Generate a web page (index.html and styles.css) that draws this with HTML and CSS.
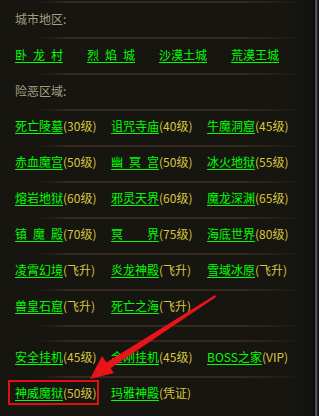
FILE: index.html
```html
<!DOCTYPE html>
<html lang="zh-CN">
<head>
<meta charset="utf-8">
<title>地图传送</title>
<link rel="stylesheet" href="styles.css">
</head>
<body>
<div class="frame">
  <div class="panel">
    <div class="row label">城市地区:</div>
    <div class="row cols4">
      <a class="link">卧&ensp;龙&ensp;村</a>
      <a class="link">烈&ensp;焰&ensp;城</a>
      <a class="link">沙漠土城</a>
      <a class="link">荒漠王城</a>
    </div>
    <div class="row label">险恶区域:</div>
    <div class="row cols3">
      <span class="cell"><a class="link">死亡陵墓</a><span class="lv">(30级)</span></span>
      <span class="cell"><a class="link">诅咒寺庙</a><span class="lv">(40级)</span></span>
      <span class="cell"><a class="link">牛魔洞窟</a><span class="lv">(45级)</span></span>
    </div>
    <div class="row cols3">
      <span class="cell"><a class="link">赤血魔宫</a><span class="lv">(50级)</span></span>
      <span class="cell"><a class="link">幽&ensp;冥&ensp;宫</a><span class="lv">(50级)</span></span>
      <span class="cell"><a class="link">冰火地狱</a><span class="lv">(55级)</span></span>
    </div>
    <div class="row cols3">
      <span class="cell"><a class="link">熔岩地狱</a><span class="lv">(60级)</span></span>
      <span class="cell"><a class="link">邪灵天界</a><span class="lv">(60级)</span></span>
      <span class="cell"><a class="link">魔龙深渊</a><span class="lv">(65级)</span></span>
    </div>
    <div class="row cols3">
      <span class="cell"><a class="link">镇&ensp;魔&ensp;殿</a><span class="lv">(70级)</span></span>
      <span class="cell"><a class="link">冥&ensp;&ensp;&ensp;&ensp;界</a><span class="lv">(75级)</span></span>
      <span class="cell"><a class="link">海底世界</a><span class="lv">(80级)</span></span>
    </div>
    <div class="row cols3">
      <span class="cell"><a class="link">凌霄幻境</a><span class="lv">(飞升)</span></span>
      <span class="cell"><a class="link">炎龙神殿</a><span class="lv">(飞升)</span></span>
      <span class="cell"><a class="link">雪域冰原</a><span class="lv">(飞升)</span></span>
    </div>
    <div class="row cols3">
      <span class="cell"><a class="link">兽皇石窟</a><span class="lv">(飞升)</span></span>
      <span class="cell"><a class="link">死亡之海</a><span class="lv">(飞升)</span></span>
    </div>
    <div class="spacer"></div>
    <div class="row cols3">
      <span class="cell"><a class="link">安全挂机</a><span class="lv">(45级)</span></span>
      <span class="cell"><a class="link">金刚挂机</a><span class="lv">(45级)</span></span>
      <span class="cell"><a class="link">BOSS之家</a><span class="lv">(VIP)</span></span>
    </div>
    <div class="row cols3">
      <span class="cell marked"><a class="link">神威魔狱</a><span class="lv">(50级)</span></span>
      <span class="cell"><a class="link">玛雅神殿</a><span class="lv">(凭证)</span></span>
    </div>
    <svg class="arrow" width="319" height="416" viewBox="0 0 319 416" aria-hidden="true">
      <polygon points="215,295 216,297 108,370 104,364" fill="#e8141a"/>
      <polygon points="90,379 102,356 114,373" fill="#e8141a"/>
    </svg>
  </div>
  <div class="edge"></div>
</div>
</body>
</html>
```
FILE: styles.css
```css
html, body {
  margin: 0;
  padding: 0;
  background: #161510;
}

body {
  width: 319px;
  height: 416px;
  overflow: hidden;
  font-family: "Noto Sans CJK SC", "Noto Sans", sans-serif;
  font-size: 12px;
}

.frame {
  display: flex;
  height: 416px;
}

.panel {
  position: relative;
  flex: 1;
  padding-top: 1px;
  background: linear-gradient(to right, #161510 0, #161510 290px, #111110 313px);
}

.edge {
  width: 6px;
  background: linear-gradient(to right, #0e0e0e 0, #0e0e0e 2px, #3a3b40 2px, #5a5c62 3px, #4a4b50 4px, #0c0c0c 5px);
}

.row {
  height: 36px;
  box-sizing: border-box;
  padding: 2px 0 4px 15px;
  display: flex;
  align-items: center;
  background: linear-gradient(to right, rgba(60,46,36,0) 38px, #35291f 70px, #35291f 240px, rgba(60,46,36,0) 306px) top left / 100% 2px no-repeat;
}

.label {
  color: #a59f80;
}

.cols4 {
  display: grid;
  grid-template-columns: repeat(4, 72px);
  align-items: center;
}

.cols3 {
  display: grid;
  grid-template-columns: repeat(3, 96px);
  align-items: center;
}

.cell {
  display: flex;
  align-items: baseline;
  justify-self: start;
  line-height: 16px;
  white-space: nowrap;
}

.link {
  color: #00ff00;
  text-decoration: underline;
  text-underline-offset: 2px;
  text-decoration-thickness: 1px;
  white-space: nowrap;
}

.lv {
  color: #d8c63e;
}

.spacer {
  height: 15px;
  background: linear-gradient(to right, rgba(60,46,36,0) 38px, #35291f 70px, #35291f 240px, rgba(60,46,36,0) 306px) top left / 100% 2px no-repeat;
}

.marked {
  position: relative;
}

.marked::after {
  content: "";
  position: absolute;
  left: -7px;
  right: -3px;
  top: -5px;
  bottom: -4px;
  border: 2px solid #e01010;
}

.arrow {
  position: absolute;
  left: 0;
  top: 0;
  pointer-events: none;
}
```
